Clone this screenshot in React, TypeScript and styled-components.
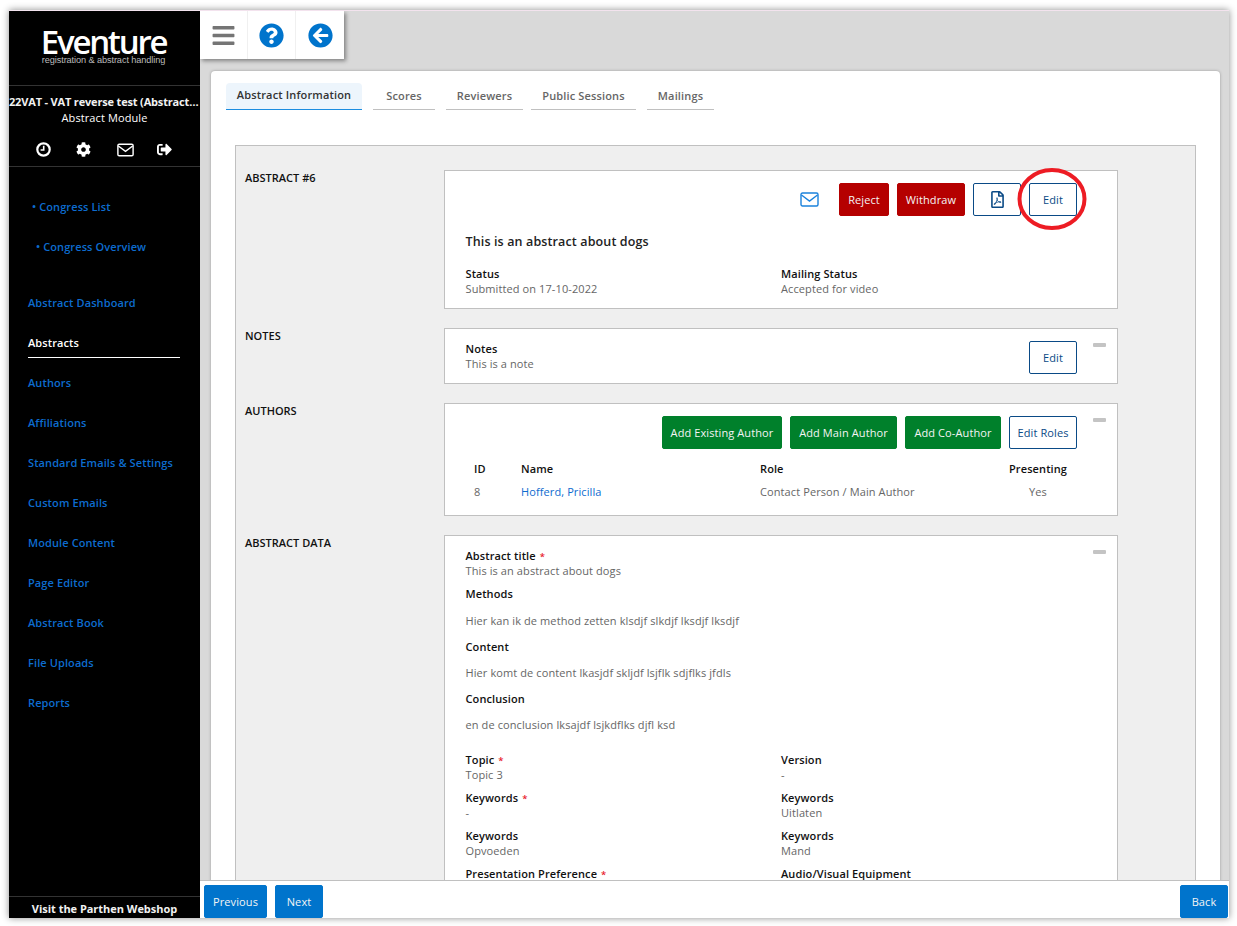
import React from "react";
import styled, { createGlobalStyle } from "styled-components";
import { FaBars, FaQuestionCircle, FaArrowCircleLeft, FaCog, FaRegFilePdf, FaSignOutAlt } from "react-icons/fa";

const Global = createGlobalStyle`
  html, body { margin: 0; padding: 0; background: #fff; height: 100%; }
  body { font-family: "Open Sans", "Liberation Sans", sans-serif; font-size: 11px; color: #666; letter-spacing: 0.1px; }
  * { box-sizing: border-box; }
`;

const Frame = styled.div`
  position: relative;
  margin: 10px 0 0 9px;
  width: 1220px;
  height: 908px;
  display: flex;
  border-top: 1px solid #f3e3ee;
  box-shadow: 0 0 7px rgba(0, 0, 0, 0.45);
  overflow: hidden;
`;

const Sidebar = styled.aside`
  width: 191px;
  flex: none;
  background: #000;
  color: #fff;
  display: flex;
  flex-direction: column;
`;

const LogoBlock = styled.div`
  height: 75px;
  border-bottom: 1px solid #333;
  padding: 16px 2px 0 0;
  text-align: center;
`;

const LogoName = styled.div`
  font-size: 33px;
  font-weight: 600;
  line-height: 30px;
  letter-spacing: -2.25px;
  color: #fff;
`;

const LogoSub = styled.div`
  font-family: "Liberation Sans", sans-serif;
  font-size: 9.2px;
  line-height: 7px;
  letter-spacing: -0.1px;
  color: #bbb;
`;

const CongressTitle = styled.div`
  margin-top: 8px;
  font-weight: 700;
  font-size: 11px;
  line-height: 15px;
  letter-spacing: -0.17px;
  color: #f2f2f2;
  white-space: nowrap;
  overflow: hidden;
  text-overflow: ellipsis;
`;

const ModuleTitle = styled.div`
  margin-top: 1px;
  text-align: center;
  line-height: 16px;
  color: #fff;
`;

const IconRow = styled.div`
  height: 41px;
  border-bottom: 1px solid #333;
  display: flex;
  align-items: center;
  padding: 7px 0 0 27px;
`;

const SideIcon = styled.span`
  width: 40.3px;
  display: flex;
  color: #fff;
  font-size: 15px;
`;

const SideLink = styled.a<{ $indent: number; $active?: boolean }>`
  display: block;
  height: ${(p) => (p.$active ? 35 : 40)}px;
  margin-right: 20px;
  padding-left: ${(p) => p.$indent}px;
  font-weight: 600;
  font-size: 11px;
  line-height: 40px;
  color: ${(p) => (p.$active ? "#fff" : "#0d6ccf")};
  border-bottom: ${(p) => (p.$active ? "1px solid #fff" : "none")};
  margin-bottom: ${(p) => (p.$active ? 5 : 0)}px;
`;

const SideUpper = styled.nav`
  padding-top: 20px;
  height: 116px;
`;

const SideLower = styled.nav`
  margin-left: 19px;
  flex: 1;
`;

const SideFooter = styled.div`
  height: 22px;
  border-top: 1px solid #333;
  text-align: center;
  font-weight: 700;
  line-height: 24px;
  letter-spacing: -0.03px;
  color: #f2f2f2;
`;

const Main = styled.main`
  flex: 1;
  min-width: 0;
  display: flex;
  flex-direction: column;
  background: #d9d9d9;
`;

const TopArea = styled.div`
  flex: 1;
  min-height: 0;
  overflow: hidden;
`;

const Toolbar = styled.div`
  width: 144px;
  height: 48px;
  background: #fff;
  display: flex;
  box-shadow: 2px 2px 4px rgba(0, 0, 0, 0.4);
`;

const ToolButton = styled.div`
  width: 48px;
  display: flex;
  align-items: center;
  justify-content: center;
  border-right: 1px solid #f0f0f0;
  &:last-child { border-right: none; }
`;

const Sheet = styled.div`
  margin: 12px 9px 0 11px;
  background: #fff;
  border-radius: 4px 4px 0 0;
  box-shadow: 0 0 3px rgba(0, 0, 0, 0.3);
  padding: 12px 24px 0 15px;
  height: 900px;
`;

const Tabs = styled.div`
  display: flex;
`;

const Tab = styled.div<{ $active?: boolean; $w: number; $gap: number }>`
  width: ${(p) => p.$w}px;
  margin-right: ${(p) => p.$gap}px;
  height: 27px;
  text-align: center;
  font-weight: 600;
  font-size: 11px;
  letter-spacing: 0.15px;
  border-radius: ${(p) => (p.$active ? "4px 4px 0 0" : "0")};
  line-height: ${(p) => (p.$active ? 23 : 25)}px;
  color: ${(p) => (p.$active ? "#333" : "#666")};
  background: ${(p) => (p.$active ? "#edf5fc" : "#fff")};
  border-bottom: 1px solid ${(p) => (p.$active ? "#1b8de0" : "#c0c0c0")};
`;

const Panel = styled.div`
  margin: 35px 0 0 9px;
  background: #efefef;
  border: 1px solid #c0c0c0;
  padding: 24px 0 0 9px;
  height: 900px;
  display: flex;
  flex-direction: column;
  gap: 19px;
`;

const Section = styled.section`
  display: grid;
  grid-template-columns: 199px 674px;
`;

const SectionLabel = styled.div`
  font-weight: 600;
  color: #111;
  line-height: 15px;
  letter-spacing: 0;
`;

const Card = styled.div<{ $h?: number }>`
  position: relative;
  background: #fff;
  border: 1px solid #c0c0c0;
  padding: 12px 40px 0 20.5px;
  ${(p) => (p.$h ? `height: ${p.$h}px;` : "")}
`;

const Collapse = styled.span`
  position: absolute;
  top: 14px;
  right: 11px;
  width: 13px;
  height: 4px;
  border-radius: 1px;
  background: #c4c4c4;
`;

const ButtonRow = styled.div`
  display: flex;
  justify-content: flex-end;
  align-items: center;
  gap: 8px;
`;

const Button = styled.button<{ $kind: "red" | "green" | "blue" | "line"; $w: number }>`
  width: ${(p) => p.$w}px;
  height: 33px;
  padding: 0;
  border-radius: 2px;
  font-family: "Open Sans", sans-serif;
  font-size: 11px;
  letter-spacing: 0.1px;
  white-space: nowrap;
  display: flex;
  align-items: center;
  justify-content: center;
  border: 1px solid ${(p) => ({ red: "#b50000", green: "#00802b", blue: "#0074cc", line: "#0a4a86" }[p.$kind])};
  background: ${(p) => ({ red: "#b50000", green: "#00802b", blue: "#0074cc", line: "#fff" }[p.$kind])};
  color: ${(p) => (p.$kind === "line" ? "#0a4a86" : "#f4f4f4")};
`;

const MailLink = styled.span`
  display: flex;
  color: #1b82dc;
  margin-right: 12px;
`;

const CardTitle = styled.div`
  margin-top: 17px;
  font-weight: 600;
  font-size: 12.5px;
  line-height: 17px;
  letter-spacing: 0.13px;
  color: #222;
`;

const FieldGrid = styled.div<{ $top: number }>`
  margin-top: ${(p) => p.$top}px;
  display: grid;
  grid-template-columns: 315.5px 1fr;
  row-gap: 8px;
`;

const Field = styled.div``;

const FieldLabel = styled.div`
  font-weight: 600;
  color: #111;
  line-height: 15px;
`;

const FieldValue = styled.div`
  color: #666;
  line-height: 15px;
  min-height: 15px;
`;

const Required = styled.span`
  color: #e8202a;
  margin-left: 4px;
  font-size: 9.5px;
  line-height: 0;
`;

const NotesBody = styled.div`
  display: flex;
  justify-content: space-between;
  align-items: flex-start;
`;

const NotesText = styled.div``;

const AuthorTable = styled.div`
  display: grid;
  grid-template-columns: 47px 239px 249px 58px;
  margin: 12px 0 0 8.5px;
  row-gap: 8px;
`;

const HeadCell = styled.div<{ $center?: boolean }>`
  font-weight: 600;
  color: #111;
  line-height: 15px;
  white-space: nowrap;
  text-align: ${(p) => (p.$center ? "center" : "left")};
`;

const BodyCell = styled.div<{ $center?: boolean; $link?: boolean }>`
  color: ${(p) => (p.$link ? "#0d6ccf" : "#666")};
  line-height: 15px;
  text-align: ${(p) => (p.$center ? "center" : "left")};
`;

const Heading = styled.div`
  margin-top: 8px;
  font-weight: 600;
  color: #111;
  line-height: 15px;
  & ~ & { margin-top: 11px; }
`;

const Paragraph = styled.div<{ $top: number }>`
  margin-top: ${(p) => p.$top}px;
  line-height: 15px;
  color: #666;
`;

const Footer = styled.footer`
  flex: none;
  height: 38px;
  background: #fff;
  border-top: 1px solid #c0c0c0;
  display: flex;
  align-items: flex-start;
  padding: 4px 1px 0 4px;
  gap: 8px;
`;

const Spacer = styled.div`
  flex: 1;
`;

const Annotation = styled.svg`
  position: absolute;
  left: 1006px;
  top: 155px;
  pointer-events: none;
`;

const Mail = ({ w, h, sw }: { w: number; h: number; sw: number }) => (
  <svg width={w} height={h} viewBox="0 0 19 15" fill="none" stroke="currentColor" strokeWidth={sw}>
    <rect x="1" y="1" width="17" height="13" rx="1.5" />
    <polyline points="1.5,3 9.5,9 17.5,3" />
  </svg>
);

const Clock = () => (
  <svg width="15" height="15" viewBox="0 0 15 15" fill="none" stroke="currentColor">
    <circle cx="7.5" cy="7.5" r="6.2" strokeWidth="2.2" />
    <polyline points="7.7,3.8 7.7,8 4.6,8" strokeWidth="1.6" />
  </svg>
);

const upper = [
  { t: "• Congress List", i: 23 },
  { t: "• Congress Overview", i: 27 },
];
const lower = ["Abstract Dashboard", "Abstracts", "Authors", "Affiliations", "Standard Emails & Settings", "Custom Emails", "Module Content", "Page Editor", "Abstract Book", "File Uploads", "Reports"];
const tabs = [
  { t: "Abstract Information", w: 136, g: 11, a: true },
  { t: "Scores", w: 62, g: 11 },
  { t: "Reviewers", w: 77, g: 8 },
  { t: "Public Sessions", w: 105, g: 11 },
  { t: "Mailings", w: 67, g: 0 },
];
const fields: { l: string; v: string; r?: boolean }[] = [
  { l: "Topic", v: "Topic 3", r: true },
  { l: "Version", v: "-" },
  { l: "Keywords", v: "-", r: true },
  { l: "Keywords", v: "Uitlaten" },
  { l: "Keywords", v: "Opvoeden" },
  { l: "Keywords", v: "Mand" },
  { l: "Presentation Preference", v: "", r: true },
  { l: "Audio/Visual Equipment", v: "" },
];

export default function App() {
  return (
    <>
      <Global />
      <Frame>
        <Sidebar>
          <LogoBlock>
            <LogoName>Eventure</LogoName>
            <LogoSub>registration &amp; abstract handling</LogoSub>
          </LogoBlock>
          <CongressTitle>22VAT - VAT reverse test (Abstract Module)</CongressTitle>
          <ModuleTitle>Abstract Module</ModuleTitle>
          <IconRow>
            <SideIcon><Clock /></SideIcon>
            <SideIcon><FaCog /></SideIcon>
            <SideIcon><Mail w={17} h={14} sw={1.6} /></SideIcon>
            <SideIcon><FaSignOutAlt /></SideIcon>
          </IconRow>
          <SideUpper>
            {upper.map((u) => (
              <SideLink key={u.t} $indent={u.i}>{u.t}</SideLink>
            ))}
          </SideUpper>
          <SideLower>
            {lower.map((l) => (
              <SideLink key={l} $indent={0} $active={l === "Abstracts"}>{l}</SideLink>
            ))}
          </SideLower>
          <SideFooter>Visit the Parthen Webshop</SideFooter>
        </Sidebar>
        <Main>
          <TopArea>
            <Toolbar>
              <ToolButton><FaBars size={25} color="#757575" /></ToolButton>
              <ToolButton><FaQuestionCircle size={25} color="#0074cc" /></ToolButton>
              <ToolButton><FaArrowCircleLeft size={25} color="#0074cc" /></ToolButton>
            </Toolbar>
            <Sheet>
              <Tabs>
                {tabs.map((t) => (
                  <Tab key={t.t} $active={t.a} $w={t.w} $gap={t.g}>{t.t}</Tab>
                ))}
              </Tabs>
              <Panel>
                <Section>
                  <SectionLabel>ABSTRACT #6</SectionLabel>
                  <Card $h={139}>
                    <ButtonRow>
                      <MailLink><Mail w={19} h={15} sw={1.4} /></MailLink>
                      <Button $kind="red" $w={50}>Reject</Button>
                      <Button $kind="red" $w={68}>Withdraw</Button>
                      <Button $kind="line" $w={48}><FaRegFilePdf size={17} /></Button>
                      <Button $kind="line" $w={48}>Edit</Button>
                    </ButtonRow>
                    <CardTitle>This is an abstract about dogs</CardTitle>
                    <FieldGrid $top={16}>
                      <Field>
                        <FieldLabel>Status</FieldLabel>
                        <FieldValue>Submitted on 17-10-2022</FieldValue>
                      </Field>
                      <Field>
                        <FieldLabel>Mailing Status</FieldLabel>
                        <FieldValue>Accepted for video</FieldValue>
                      </Field>
                    </FieldGrid>
                  </Card>
                </Section>
                <Section>
                  <SectionLabel>NOTES</SectionLabel>
                  <Card $h={56}>
                    <Collapse />
                    <NotesBody>
                      <NotesText>
                        <FieldLabel>Notes</FieldLabel>
                        <FieldValue>This is a note</FieldValue>
                      </NotesText>
                      <Button $kind="line" $w={48}>Edit</Button>
                    </NotesBody>
                  </Card>
                </Section>
                <Section>
                  <SectionLabel>AUTHORS</SectionLabel>
                  <Card $h={113}>
                    <Collapse />
                    <ButtonRow>
                      <Button $kind="green" $w={120}>Add Existing Author</Button>
                      <Button $kind="green" $w={107}>Add Main Author</Button>
                      <Button $kind="green" $w={96}>Add Co-Author</Button>
                      <Button $kind="line" $w={68}>Edit Roles</Button>
                    </ButtonRow>
                    <AuthorTable>
                      <HeadCell>ID</HeadCell>
                      <HeadCell>Name</HeadCell>
                      <HeadCell>Role</HeadCell>
                      <HeadCell $center>Presenting</HeadCell>
                      <BodyCell>8</BodyCell>
                      <BodyCell $link>Hofferd, Pricilla</BodyCell>
                      <BodyCell>Contact Person / Main Author</BodyCell>
                      <BodyCell $center>Yes</BodyCell>
                    </AuthorTable>
                  </Card>
                </Section>
                <Section>
                  <SectionLabel>ABSTRACT DATA</SectionLabel>
                  <Card>
                    <Collapse />
                    <FieldLabel>Abstract title<Required>*</Required></FieldLabel>
                    <FieldValue>This is an abstract about dogs</FieldValue>
                    <Heading>Methods</Heading>
                    <Paragraph $top={12}>Hier kan ik de method zetten klsdjf slkdjf lksdjf lksdjf</Paragraph>
                    <Heading>Content</Heading>
                    <Paragraph $top={11}>Hier komt de content lkasjdf skljdf lsjflk sdjflks jfdls</Paragraph>
                    <Heading>Conclusion</Heading>
                    <Paragraph $top={11}>en de conclusion lksajdf lsjkdflks djfl ksd</Paragraph>
                    <FieldGrid $top={20}>
                      {fields.map((f, i) => (
                        <Field key={i}>
                          <FieldLabel>{f.l}{f.r && <Required>*</Required>}</FieldLabel>
                          <FieldValue>{f.v}</FieldValue>
                        </Field>
                      ))}
                    </FieldGrid>
                  </Card>
                </Section>
              </Panel>
            </Sheet>
          </TopArea>
          <Footer>
            <Button $kind="blue" $w={63}>Previous</Button>
            <Button $kind="blue" $w={48}>Next</Button>
            <Spacer />
            <Button $kind="blue" $w={48}>Back</Button>
          </Footer>
        </Main>
        <Annotation width="76" height="70" viewBox="0 0 76 70">
          <ellipse cx="37" cy="33" rx="32.5" ry="29" fill="none" stroke="#ed1c24" strokeWidth="4" />
        </Annotation>
      </Frame>
    </>
  );
}
